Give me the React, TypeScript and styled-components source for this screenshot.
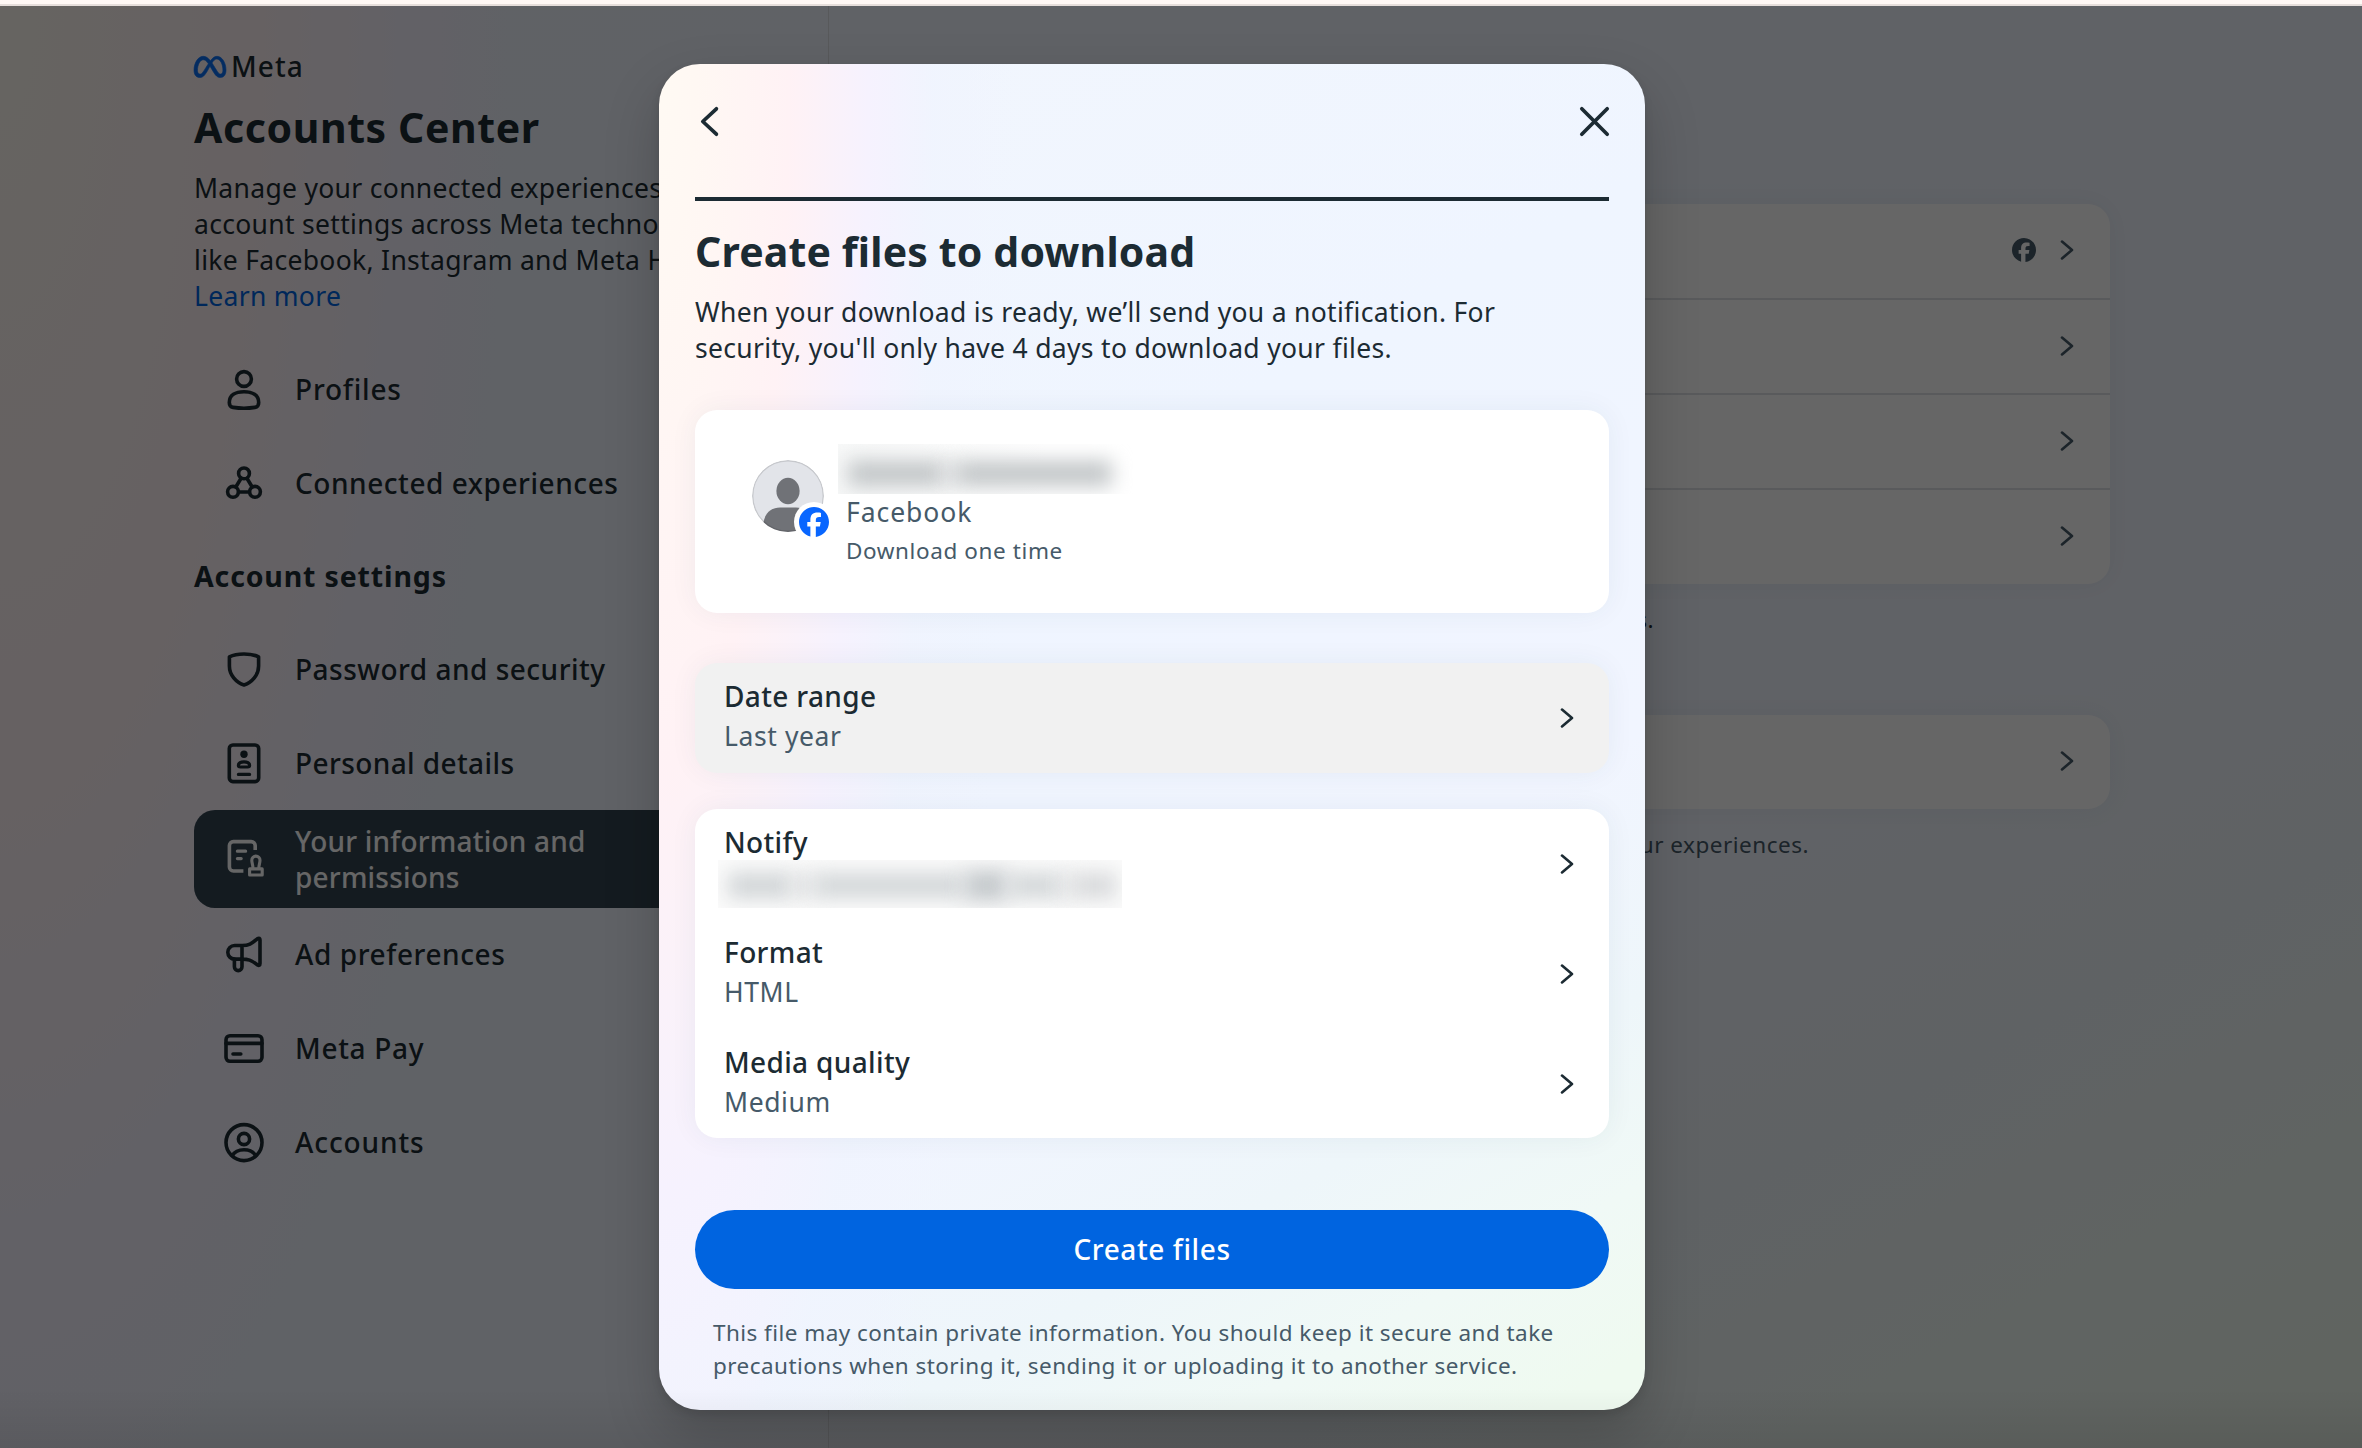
import React from "react";
import styled, { createGlobalStyle, css } from "styled-components";
import { FaFacebook, FaMeta } from "react-icons/fa6";

const ink = "#1c2b33";
const muted = "#465a69";

const GlobalStyle = createGlobalStyle`
  * { box-sizing: border-box; }
  body {
    margin: 0;
    font-family: "Noto Sans", "Open Sans", sans-serif;
    color: ${ink};
    overflow: hidden;
  }
`;

const wash = (reach: string) => css`
  background:
    radial-gradient(
      ${reach} 145% at 0 0,
      #fffaf3 0%,
      #fff8f3 10%,
      #fff2f5 36%,
      #f6f2fe 58%,
      rgba(240, 244, 254, 0.8) 76%,
      rgba(238, 245, 255, 0) 100%
    ),
    linear-gradient(
      151deg,
      #f2f6fd 0%,
      #eff5ff 35%,
      #f1f5ff 64%,
      #eef6fa 78%,
      #f0f9f6 88%,
      #effaf0 97%
    );
`;

const Screen = styled.div`
  position: relative;
  display: flex;
  flex-direction: column;
  width: 100%;
  height: 1448px;
`;

const BrowserEdge = styled.div`
  flex: none;
  height: 6px;
  background: #fff8f5;
  border-bottom: 2px solid #e6dedb;
`;

const Page = styled.div`
  flex: 1;
  display: flex;
  ${wash("29%")}
`;

const Sidebar = styled.aside`
  width: 829px;
  padding: 45px 48px 0 194px;
  border-right: 1px solid #dcdfe4;
`;

const Brand = styled.div`
  display: flex;
  align-items: center;
  gap: 5px;
  height: 32px;
  svg {
    width: 32px;
    height: 26px;
    color: #0b6ff2;
    stroke: currentColor;
    stroke-width: 12px;
    overflow: visible;
  }
`;

const BrandName = styled.span`
  font-size: 28px;
  font-weight: 500;
  line-height: 30px;
  letter-spacing: 1.1px;
  padding-bottom: 2px;
`;

const SidebarTitle = styled.h1`
  margin: 20px 0 19px;
  font-size: 41px;
  font-weight: 700;
  line-height: 48px;
  letter-spacing: 0.6px;
  white-space: nowrap;
`;

const Intro = styled.p`
  margin: 0;
  font-size: 26.5px;
  line-height: 36px;
  letter-spacing: 0.31px;
  white-space: nowrap;
`;

const LearnMore = styled.a`
  color: #0064e0;
`;

const Nav = styled.nav`
  display: flex;
  flex-direction: column;
  margin-top: 28px;
`;

const NavRow = styled.a<{ $active?: boolean }>`
  display: flex;
  align-items: center;
  gap: 31px;
  height: ${(p) => (p.$active ? 98 : 94)}px;
  margin-bottom: ${(p) => (p.$active ? -1 : 0)}px;
  padding-left: 30px;
  border-radius: 21px;
  color: ${(p) => (p.$active ? "#ffffff" : ink)};
  background: ${(p) => (p.$active ? "#334552" : "transparent")};
`;

const NavLabel = styled.span<{ $track: number }>`
  font-size: 28px;
  font-weight: 500;
  line-height: 36px;
  letter-spacing: ${(p) => p.$track}px;
  white-space: pre-line;
`;

const NavHeading = styled.h2`
  margin: 0;
  height: 92px;
  font-size: 28.5px;
  font-weight: 700;
  line-height: 93px;
  letter-spacing: 0.85px;
`;

const Glyph = styled.svg`
  flex: none;
  width: 40px;
  height: 40px;
  overflow: visible;
  fill: none;
  stroke: currentColor;
  stroke-width: 3.6;
  stroke-linecap: round;
  stroke-linejoin: round;
`;

const Main = styled.main`
  display: flex;
  flex-direction: column;
  width: 1281px;
  padding: 198px 0 0 72px;
`;

const Card = styled.section`
  flex: none;
  border-radius: 22px;
  background: #fff;
  box-shadow: 0 0 28px rgba(30, 60, 90, 0.06);
  overflow: hidden;
`;

const LinkRow = styled.div<{ $height: number }>`
  display: flex;
  align-items: center;
  justify-content: flex-end;
  gap: 24px;
  height: ${(p) => p.$height}px;
  padding: 0 36px 2px 0;
  color: ${muted};
  & + & {
    border-top: 2px solid #dee1e5;
  }
`;

const CardNote = styled.p<{ $width: number; $dark?: boolean; $after: number }>`
  margin: 19px 0 ${(p) => p.$after}px;
  width: ${(p) => p.$width}px;
  text-align: right;
  font-size: 22.5px;
  line-height: 33px;
  letter-spacing: 0.5px;
  color: ${(p) => (p.$dark ? ink : muted)};
`;

const Scrim = styled.div`
  position: absolute;
  inset: 6px 0 0 0;
  display: flex;
  align-items: flex-start;
  justify-content: center;
  padding: 58px 58px 0 0;
  background: rgba(0, 0, 0, 0.6);
`;

const BottomShade = styled.div`
  position: absolute;
  left: 0;
  right: 0;
  bottom: 0;
  height: 60px;
  background: linear-gradient(rgba(0, 0, 0, 0), rgba(0, 0, 0, 0.08));
`;

const Dialog = styled.div`
  display: flex;
  flex-direction: column;
  width: 986px;
  height: 1346px;
  padding: 0 36px;
  border-radius: 41px;
  box-shadow: 0 24px 56px rgba(0, 0, 0, 0.2), 0 4px 8px rgba(0, 0, 0, 0.1);
  ${wash("36.6%")}
`;

const DialogHeader = styled.header`
  display: flex;
  align-items: center;
  justify-content: space-between;
  height: 137px;
  padding: 0 0 18px 6px;
  border-bottom: 4px solid ${ink};
`;

const HeaderIcon = styled.svg`
  height: 29px;
  overflow: visible;
  fill: none;
  stroke: ${ink};
  stroke-width: 3.7;
  stroke-linecap: round;
  stroke-linejoin: round;
`;

const DialogTitle = styled.h2`
  margin: 25px 0 18px;
  font-size: 41px;
  font-weight: 700;
  line-height: 50px;
  letter-spacing: 0.15px;
`;

const DialogText = styled.p`
  margin: 0 0 44px;
  font-size: 26.5px;
  line-height: 36px;
  letter-spacing: 0.31px;
  white-space: nowrap;
`;

const ProfileCard = styled(Card)`
  display: flex;
  gap: 22px;
  height: 203px;
  margin-bottom: 50px;
  padding: 34px 0 0 57px;
`;

const Avatar = styled.svg`
  flex: none;
  width: 72px;
  height: 72px;
  margin-top: 16px;
  overflow: visible;
`;

const AvatarWrap = styled.div`
  position: relative;
  height: 88px;
`;

const Badge = styled.span`
  position: absolute;
  left: 42px;
  top: 58px;
  display: flex;
  padding: 5px;
  border-radius: 50%;
  background: #fff;
  color: #0866ff;
  svg {
    width: 30px;
    height: 30px;
  }
`;

const ProfileInfo = styled.div`
  display: flex;
  flex-direction: column;
`;

const Network = styled.div`
  font-size: 26.5px;
  line-height: 36px;
  letter-spacing: 0.95px;
  color: ${muted};
`;

const Frequency = styled.div`
  margin-top: 4px;
  font-size: 22.5px;
  line-height: 33px;
  letter-spacing: 0.6px;
  color: ${muted};
`;

const Redacted = styled.div<{ $width: number; $height: number; $shift: number; $inset: string; $wash: string }>`
  display: flex;
  align-items: center;
  flex: none;
  width: ${(p) => p.$width}px;
  height: ${(p) => p.$height}px;
  margin-left: -${(p) => p.$shift}px;
  padding: ${(p) => p.$inset};
  background: ${(p) => p.$wash};
  overflow: hidden;
`;

const Smear = styled.span<{ $grow: number; $tone: string; $tall: number }>`
  flex: ${(p) => p.$grow};
  height: ${(p) => p.$tall}px;
  background: ${(p) => p.$tone};
  filter: blur(10px);
`;

const OptionCard = styled(Card)<{ $hovered?: boolean }>`
  margin-bottom: 36px;
  background: ${(p) => (p.$hovered ? "#f1f1f1" : "#fff")};
`;

const OptionList = styled(Card)`
  height: 329px;
  margin-bottom: 72px;
`;

const OptionRow = styled.div`
  display: flex;
  align-items: center;
  justify-content: space-between;
  height: 110px;
  padding: 0 35px 0 29px;
`;

const OptionCopy = styled.div`
  display: flex;
  flex-direction: column;
  align-self: flex-start;
  padding-top: 15px;
`;

const OptionName = styled.div`
  font-size: 28px;
  font-weight: 500;
  line-height: 36px;
  letter-spacing: 0.35px;
`;

const OptionValue = styled.div`
  margin-top: 4px;
  font-size: 26.5px;
  line-height: 37px;
  letter-spacing: 0.6px;
  color: ${muted};
`;

const PrimaryButton = styled.button`
  flex: none;
  height: 79px;
  padding: 0 0 2px;
  border: 0;
  border-radius: 40px;
  background: #0064e0;
  color: #fff;
  font: 500 28px/36px "Noto Sans", sans-serif;
  letter-spacing: 0.6px;
`;

const Disclaimer = styled.p<{ $track?: number }>`
  margin: 27px 0 0 18px;
  font-size: 22.5px;
  line-height: 33px;
  letter-spacing: 0.45px;
  color: ${muted};
  white-space: nowrap;
`;

const RowChevron = styled.svg`
  flex: none;
  width: 14px;
  height: 20px;
  fill: none;
  stroke: currentColor;
  stroke-width: 2.6;
  stroke-linecap: round;
  stroke-linejoin: round;
`;

const Chevron = () => (
  <RowChevron viewBox="0 0 14 20">
    <path d="M2 1.6 12 10 2 18.4" />
  </RowChevron>
);

const glyphs: Record<string, React.ReactNode> = {
  profile: (
    <>
      <circle cx="0" cy="-10" r="7.4" />
      <path d="M-14.7 13.5C-14.7 6-8.5 2.7 0 2.7S14.7 6 14.7 13.5C14.7 17 13.5 18 11 18.4C5 19.3-5 19.3-11 18.4C-13.5 18-14.7 17-14.7 13.5Z" />
    </>
  ),
  connected: (
    <>
      <circle cx="0" cy="-9.6" r="5.4" />
      <circle cx="-11" cy="8.8" r="5.4" />
      <circle cx="11" cy="8.8" r="5.4" />
      <path d="M-2.9-4.8-8.2 4M2.9-4.8 8.2 4M-5.4 9H5.4" />
    </>
  ),
  shield: (
    <path d="M-14.6-12.2C-10-14.5-5-15 0-15S10-14.5 14.6-12.2V-3C14.6 6 8 13.4 0 16C-8 13.4-14.6 6-14.6-3Z" />
  ),
  id: (
    <>
      <rect x="-14.7" y="-18" width="29.4" height="36.6" rx="3.6" />
      <circle cx="0" cy="-8.8" r="3.7" fill="currentColor" stroke="none" />
      <path d="M-5.6 2.6C-5.6-.2-3.4-1.2 0-1.2S5.6-.2 5.6 2.6C5.6 4 4.8 4 3.6 4H-3.6C-4.8 4-5.6 4-5.6 2.6ZM-5.6 11.4H5.6" strokeWidth="3.2" />
    </>
  ),
  info: (
    <>
      <path d="M-.6 12H-10.6a4 4 0 0 1-4-4V-13.4a4 4 0 0 1 4-4H7.2a4 4 0 0 1 4 4V-9" strokeLinecap="butt" />
      <path d="M-6.6-7.8H1.6M-6.6-.4H-2.8" strokeWidth="3.2" />
      <path d="M9 9.6C9 6 7.8 4 7.8 1.2A4.1 4.1 0 0 1 16 1.2C16 4 14.8 6 14.8 9.6M5.6 9.9H18.2V16H5.6Z" strokeWidth="3.1" />
    </>
  ),
  megaphone: (
    <>
      <path d="M-2-8.5H-9.4a6.8 6.8 0 0 0 0 13.6H-2ZM-2-8.5C5-8.5 7-10 13.6-15.4C15-16.2 16-15.6 16-14V9.6C16 11.4 15 11.8 13.6 11C7 6 4 5.1-2 5.1" />
      <path d="M-9.6 5.1V12.8a3.8 3.8 0 0 0 7.6 0V5.1" />
    </>
  ),
  card: (
    <>
      <rect x="-18" y="-12.3" width="36" height="25.6" rx="4" />
      <path d="M-18-4.6H18M-11 6H-3.2" />
    </>
  ),
  account: (
    <>
      <circle cx="0" cy="0.6" r="18" />
      <circle cx="0" cy="-3" r="5.6" />
      <path d="M-11.6 13.6C-9 9-4.6 7.8 0 7.8S9 9 11.6 13.6" />
    </>
  ),
};

const NavItem = ({ icon, label, track = 0.5, active }: { icon: string; label: string; track?: number; active?: boolean }) => (
  <NavRow $active={active}>
    <Glyph viewBox="-20 -20 40 40">{glyphs[icon]}</Glyph>
    <NavLabel $track={track}>{label}</NavLabel>
  </NavRow>
);

const Option = ({ name, children }: { name: string; children: React.ReactNode }) => (
  <OptionRow>
    <OptionCopy>
      <OptionName>{name}</OptionName>
      {children}
    </OptionCopy>
    <Chevron />
  </OptionRow>
);

export default function App() {
  return (
    <Screen>
      <GlobalStyle />
      <BrowserEdge />
      <Page>
        <Sidebar>
          <Brand>
            <FaMeta />
            <BrandName>Meta</BrandName>
          </Brand>
          <SidebarTitle>Accounts Center</SidebarTitle>
          <Intro>
            Manage your connected experiences
            <br />
            account settings across Meta techno
            <br />
            like Facebook, Instagram and Meta H
            <br />
            <LearnMore>Learn more</LearnMore>
          </Intro>
          <Nav>
            <NavItem icon="profile" label="Profiles" track={0.8} />
            <NavItem icon="connected" label="Connected experiences" track={0.55} />
            <NavHeading>Account settings</NavHeading>
            <NavItem icon="shield" label="Password and security" />
            <NavItem icon="id" label="Personal details" track={0.4} />
            <NavItem icon="info" label={"Your information and\npermissions"} track={0.2} active />
            <NavItem icon="megaphone" label="Ad preferences" track={0.6} />
            <NavItem icon="card" label="Meta Pay" track={0.7} />
            <NavItem icon="account" label="Accounts" track={0.9} />
          </Nav>
        </Sidebar>
        <Main>
          <Card>
            <LinkRow $height={94}>
              <FaFacebook size={24} />
              <Chevron />
            </LinkRow>
            <LinkRow $height={95}>
              <Chevron />
            </LinkRow>
            <LinkRow $height={95}>
              <Chevron />
            </LinkRow>
            <LinkRow $height={96}>
              <Chevron />
            </LinkRow>
          </Card>
          <CardNote $width={753} $after={79} $dark>
            s.
          </CardNote>
          <Card>
            <LinkRow $height={94}>
              <Chevron />
            </LinkRow>
          </Card>
          <CardNote $width={908} $after={0}>
            ur experiences.
          </CardNote>
        </Main>
      </Page>
      <Scrim>
        <Dialog role="dialog">
          <DialogHeader>
            <HeaderIcon width="17" viewBox="0 0 17 29">
              <path d="M15.4 1.8 1.8 14.5 15.4 27.2" />
            </HeaderIcon>
            <HeaderIcon width="29" viewBox="0 0 29 29">
              <path d="M1.8 1.8 27.2 27.2M27.2 1.8 1.8 27.2" />
            </HeaderIcon>
          </DialogHeader>
          <DialogTitle>Create files to download</DialogTitle>
          <DialogText>
            When your download is ready, we’ll send you a notification. For
            <br />
            security, you'll only have 4 days to download your files.
          </DialogText>
          <ProfileCard>
            <AvatarWrap>
              <Avatar viewBox="-36 -36 72 72">
                <clipPath id="face">
                  <circle r="36" />
                </clipPath>
                <g clipPath="url(#face)">
                  <circle r="36" fill="#e2e4e9" />
                  <ellipse cy="-5" rx="11.6" ry="13.2" fill="#707277" />
                  <path d="M-25 30C-24 18-18 11.5-8 11.5H8C18 11.5 24 18 25 30V40H-25Z" fill="#707277" />
                  <circle r="35.3" fill="none" stroke="#000" strokeOpacity=".12" strokeWidth="1.4" />
                </g>
              </Avatar>
              <Badge>
                <FaFacebook />
              </Badge>
            </AvatarWrap>
            <ProfileInfo>
              <Redacted $width={298} $height={50} $shift={8} $inset="8px 24px 0 10px" $wash="linear-gradient(90deg, #f7f8f8, #fff 70%)">
                <Smear $grow={8} $tone="#c0c4c6" $tall={25} />
                <Smear $grow={1} $tone="#d3d5d7" $tall={23} />
                <Smear $grow={13} $tone="#c0c4c6" $tall={25} />
              </Redacted>
              <Network>Facebook</Network>
              <Frequency>Download one time</Frequency>
            </ProfileInfo>
          </ProfileCard>
          <OptionCard $hovered>
            <Option name="Date range">
              <OptionValue>Last year</OptionValue>
            </Option>
          </OptionCard>
          <OptionList>
            <Option name="Notify">
              <Redacted $width={404} $height={48} $shift={6} $inset="2px 6px 0 10px" $wash="#fbfbfb">
                <Smear $grow={6} $tone="#d0d4d6" $tall={25} />
                <Smear $grow={2} $tone="#dcdedf" $tall={23} />
                <Smear $grow={14} $tone="#d2d6d8" $tall={25} />
                <Smear $grow={4} $tone="#c3c8cb" $tall={31} />
                <Smear $grow={5} $tone="#d2d6d8" $tall={25} />
                <Smear $grow={1} $tone="#dddfe0" $tall={25} />
                <Smear $grow={4} $tone="#d6d8da" $tall={25} />
              </Redacted>
            </Option>
            <Option name="Format">
              <OptionValue>HTML</OptionValue>
            </Option>
            <Option name="Media quality">
              <OptionValue>Medium</OptionValue>
            </Option>
          </OptionList>
          <PrimaryButton>Create files</PrimaryButton>
          <Disclaimer>
            This file may contain private information. You should keep it secure and take
            <br />
            precautions when storing it, sending it or uploading it to another service.
          </Disclaimer>
        </Dialog>
        <BottomShade />
      </Scrim>
    </Screen>
  );
}
